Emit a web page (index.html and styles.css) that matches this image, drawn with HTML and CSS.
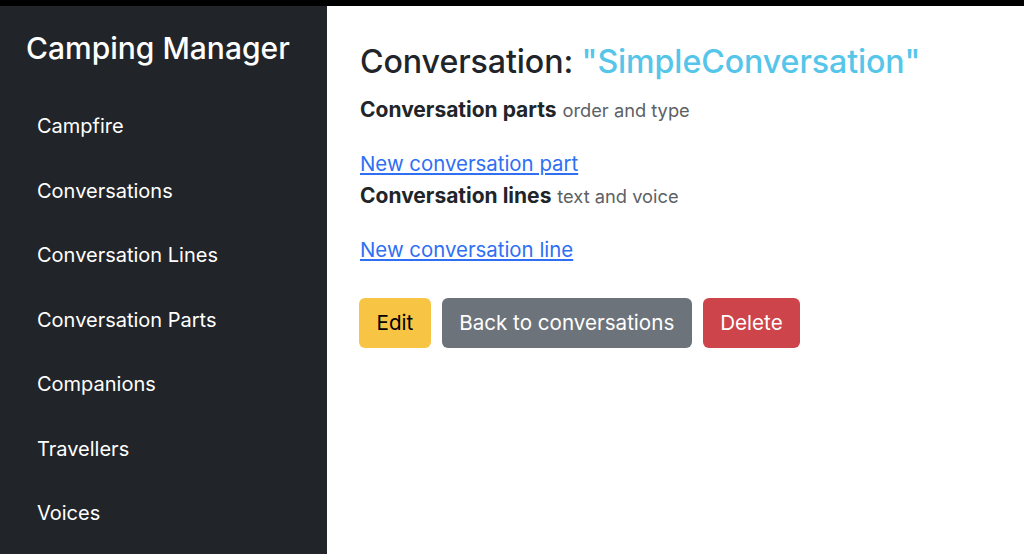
FILE: index.html
```html
<!DOCTYPE html>
<html>
<head>
<meta charset="utf-8">
<link rel="stylesheet" href="styles.css">
</head>
<body>
<div class="topbar"></div>
<div class="layout">
  <aside class="sidebar">
    <div class="brand">Camping Manager</div>
    <nav class="nav">
      <a class="nav-link" href="#">Campfire</a>
      <a class="nav-link" href="#">Conversations</a>
      <a class="nav-link" href="#">Conversation Lines</a>
      <a class="nav-link" href="#">Conversation Parts</a>
      <a class="nav-link" href="#">Companions</a>
      <a class="nav-link" href="#">Travellers</a>
      <a class="nav-link" href="#">Voices</a>
    </nav>
  </aside>
  <main class="main">
    <h1 class="title">Conversation: <span class="name">"SimpleConversation"</span></h1>
    <div class="section"><strong>Conversation parts</strong> <span class="muted">order and type</span></div>
    <a class="link first-link" href="#">New conversation part</a>
    <div class="section section-tight"><strong>Conversation lines</strong> <span class="muted">text and voice</span></div>
    <a class="link" href="#">New conversation line</a>
    <div class="actions">
      <a class="btn btn-warning" href="#">Edit</a>
      <a class="btn btn-secondary" href="#">Back to conversations</a>
      <a class="btn btn-danger" href="#">Delete</a>
    </div>
  </main>
</div>
</body>
</html>
```
FILE: styles.css
```css
html, body {
  margin: 0;
  padding: 0;
  height: 100%;
}
body {
  font-family: Inter, "Liberation Sans", sans-serif;
  color: #212529;
  background: #fff;
  font-size: 20px;
  overflow: hidden;
}
.topbar {
  height: 6px;
  background: #000;
}
.layout {
  display: flex;
  height: 548px;
}
.sidebar {
  width: 327px;
  flex: none;
  background: #212529;
  color: #fff;
}
.brand {
  font-size: 30px;
  font-weight: 500;
  padding: 20px 0 0 26px;
  height: 44px;
  line-height: 44px;
  margin-bottom: 4px;
}
.nav {
  display: flex;
  flex-direction: column;
  padding-top: 20px;
}
.nav-link {
  color: #fff;
  text-decoration: none;
  height: 64.5px;
  line-height: 64.5px;
  padding-left: 37px;
  font-size: 20px;
}
.main {
  flex: 1;
  padding: 32px 0 0 33px;
  display: flex;
  flex-direction: column;
  align-items: flex-start;
}
.title {
  margin: 0;
  font-size: 32.2px;
  font-weight: 500;
  line-height: 48px;
  letter-spacing: -0.1px;
}
.name {
  color: #56c5ea;
}
.section {
  font-size: 21px;
  line-height: 28px;
  margin-top: 10px;
}
.section-tight {
  margin-top: 4px;
}
.section strong {
  font-weight: 700;
}
.muted {
  color: #5c6166;
  font-size: 18.3px;
}
.link {
  color: #2f6ff3;
  text-decoration: underline;
  font-size: 20.4px;
  line-height: 28px;
}
.first-link {
  margin-top: 25px;
}
.section + .link {
  margin-top: 26px;
}
.actions {
  display: flex;
  gap: 11px;
  margin-top: 34px;
  margin-left: -1px;
}
.btn {
  display: block;
  height: 50px;
  line-height: 50px;
  padding: 0 17.5px;
  border-radius: 6px;
  text-decoration: none;
  font-size: 20.6px;
}
.btn-warning {
  background: #f8c444;
  color: #000;
}
.btn-secondary {
  background: #6c737b;
  color: #fff;
}
.btn-danger {
  background: #cd444a;
  color: #fff;
}
```
